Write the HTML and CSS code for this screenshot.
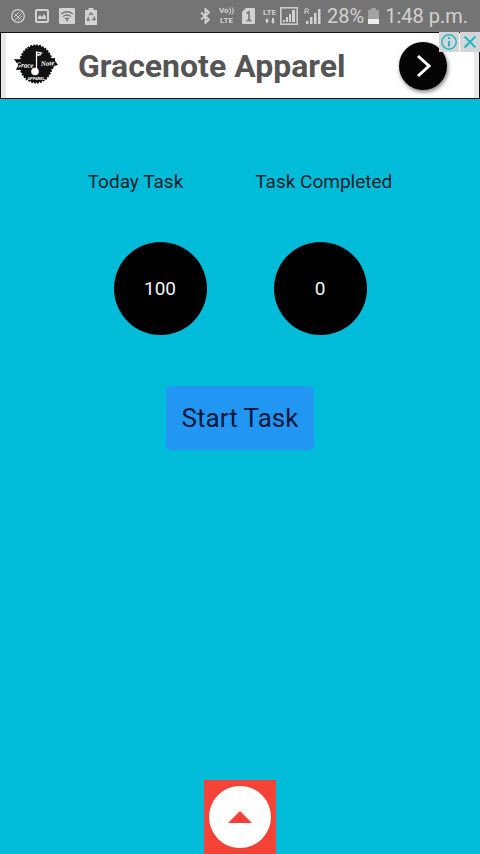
FILE: index.html
```html
<!DOCTYPE html>
<html lang="en">
<head>
<meta charset="utf-8">
<meta name="viewport" content="width=device-width, initial-scale=1">
<title>Today Task</title>
<link rel="stylesheet" href="styles.css">
</head>
<body>
<header class="status">
  <div class="notices">
    <svg width="14" height="14" viewBox="0 0 14 14" fill="none" stroke="currentColor"><circle cx="7" cy="7" r="6.300" stroke-width="1.300"/><path d="M3 8l5-5M4 11l7-7M7 11l4-4M4 5l5 5" stroke-width=".9"/></svg>
    <svg width="14" height="14" viewBox="0 0 14 14"><rect x="1" y="1" width="12" height="12" rx="1" fill="none" stroke="currentColor" stroke-width="2"/><path d="M3 10V8l2-2 2 2 2-3 2 3v2z" fill="currentColor"/></svg>
    <svg width="16" height="16" viewBox="0 0 16 16"><rect width="16" height="16" rx="1" fill="currentColor"/><g fill="none" stroke="#747474" stroke-width="1.300"><path d="M2 6q6-4.500 12 0M4 8.500q4-3 8 0M6 11q2-1.500 4 0"/></g><circle cx="8" cy="12.500" r="1" fill="#747474"/></svg>
    <svg width="12" height="17" viewBox="0 0 12 17"><path d="M3.500 0h5v2H12v15H0V2h3.500z" fill="currentColor"/><path d="M4 7l2-2 2 2M9 8.500l1 3H7M5 12H2.500l1-3" fill="none" stroke="#747474" stroke-width="1.400"/></svg>
  </div>
  <div class="system">
    <svg width="11" height="16" viewBox="0 0 11 16" fill="none" stroke="currentColor" stroke-width="1.800"><path d="M1 4.500l8 7L5.500 15V1L9 4.500l-8 7"/></svg>
    <span class="network"><span>Vo))</span><span>LTE</span></span>
    <svg width="13" height="16" viewBox="0 0 13 16"><path d="M4 0h8q1 0 1 1v14q0 1-1 1H1q-1 0-1-1V4z" fill="currentColor"/><path d="M4.500 5.500L7 4v8.500M4.500 12.500h5" fill="none" stroke="#747474" stroke-width="1.600"/></svg>
    <span class="network"><span>LTE</span><svg width="10" height="6" viewBox="0 0 10 6" fill="currentColor"><path d="M0 3l2-3 2 3H3v2H1V3zM6 3h1V0h2v3h1L8 6z"/></svg></span>
    <svg class="signal" width="18" height="18" viewBox="0 0 18 18"><rect x=".8" y=".8" width="16.400" height="16.400" fill="none" stroke="currentColor" stroke-width="1.500"/><path d="M3 13h2v2H3zM6 10h2v5H6zM9 7h2v8H9zM12 3h3v12h-3z" fill="currentColor"/></svg>
    <svg class="roaming" width="17" height="17" viewBox="0 0 17 17"><path d="M1 6V1h2.500q1 0 1 1.300T3.500 3.500H1M3 3.500L5 6" fill="none" stroke="currentColor"/><path d="M2 13h2.500v3H2zM6 9h2.500v7H6zM10 5h2.500v11H10zM14 1h2.500v15H14z" fill="currentColor"/></svg>
    <span class="percent">28%</span>
    <svg class="battery" width="11" height="16" viewBox="0 0 11 16"><path d="M3 0h5v2h3v9H0V2h3z" fill="#a3a3a3"/><path d="M0 11h11v5H0z" fill="#eee"/></svg>
    <time>1:48 p.m.</time>
  </div>
</header>

<aside class="ad" aria-label="Advertisement">
  <svg class="logo" width="44" height="40" viewBox="0 0 44 40" role="img" aria-label="Grace Note Apparel">
    <ellipse cx="22" cy="20" rx="16" ry="18.500" fill="#111" stroke="#111" stroke-width="2" stroke-dasharray="2 1"/>
    <path d="M0 15l18 1v9L2 26l2-5zM25 16l16-2v3l3 4-4 1-1 3-14 1z" fill="#111"/>
    <path d="M22.500 27V8l5 1-4 3M23 10l4 1" fill="none" stroke="#fff" stroke-width="1.200"/>
    <circle cx="21" cy="27.500" r="3.800" fill="#fff"/>
    <g class="logo-script"><text x="2" y="23" transform="rotate(3 2 23)">Grace</text><text x="27" y="22" transform="rotate(-4 27 22)">Note</text></g>
    <text class="logo-small" x="22" y="36" text-anchor="middle">APPAREL</text>
  </svg>
  <span class="brand">Gracenote Apparel</span>
  <a class="visit" href="#" aria-label="Visit advertiser"><svg width="48" height="48" viewBox="0 0 48 48"><path d="M19 14l11 10-11 10" fill="none" stroke="#fff" stroke-width="3"/></svg></a>
  <div class="ad-tools">
    <button aria-label="Ad information"><svg width="20" height="20" viewBox="0 0 20 20" fill="none" stroke="#25b7c6"><circle cx="10" cy="10" r="7.200" stroke-width="1.500"/><path d="M10 9v5.500M10 5v2" stroke-width="2"/></svg></button>
    <button aria-label="Close ad"><svg width="20" height="20" viewBox="0 0 20 20"><path d="M4.500 4.500l11 11M15.500 4.500l-11 11" fill="none" stroke="#25b7c6" stroke-width="2"/></svg></button>
  </div>
</aside>

<main>
  <div class="labels"><span>Today Task</span><span>Task Completed</span></div>
  <div class="counts"><output class="count" aria-label="Today Task">100</output><output class="count" aria-label="Task Completed">0</output></div>
  <button class="start">Start Task</button>
</main>

<footer>
  <button class="expand" aria-label="Expand"><svg width="62" height="62" viewBox="0 0 62 62"><circle cx="31" cy="31" r="31" fill="#fff"/><path d="M31 25l12 12H19z" fill="#f44336"/></svg></button>
</footer>
</body>
</html>
```
FILE: styles.css
```css
* { box-sizing: border-box; }
body {
  margin: 0;
  min-height: 100vh;
  display: flex;
  flex-direction: column;
  background: #00bcd8;
  color: #08202a;
  font-family: Roboto, "Liberation Sans", sans-serif;
}
button { border: 0; padding: 0; font: inherit; color: inherit; }
svg { display: block; flex: none; }

.status {
  height: 32px;
  display: flex;
  justify-content: space-between;
  align-items: center;
  padding: 0 12px 0 11px;
  background: #747474;
  color: #d2d2d2;
}
.notices { display: flex; align-items: center; gap: 10px; }
.system { display: flex; align-items: center; gap: 8px; }
.network {
  display: flex;
  flex-direction: column;
  align-items: center;
  font-size: 8px;
  line-height: 10px;
  font-weight: 700;
}
.signal { margin-left: -4px; }
.roaming { margin-left: -2px; }
.percent, time { font-size: 20px; line-height: 32px; }
.percent { margin-left: -2px; }
.battery { margin-left: -4px; }
time { margin-left: -2px; }

.ad {
  position: relative;
  height: 67px;
  display: flex;
  align-items: center;
  padding: 0 32px 0 8px;
  border: 1px solid #111;
  background: #fff;
  box-shadow: inset 5px 0 #e8e8e8, inset -5px 0 #e8e8e8;
}
.logo { margin: 0 20px 4px 5px; }
.logo-script { fill: #fff; font: italic 700 7px "Liberation Serif", serif; }
.logo-small { fill: #fff; font: 700 4px Roboto, sans-serif; }
.brand { flex: 1; font-size: 32px; font-weight: 700; line-height: 40px; color: #555; white-space: nowrap; }
.visit { border-radius: 50%; background: #050505; box-shadow: 1px 2px 4px #0008; }
.ad-tools { position: absolute; top: -1px; right: -1px; display: flex; gap: 1px; }
.ad-tools button { background: #d3d5d7; }

main { flex: 1; display: flex; flex-direction: column; align-items: center; padding-top: 71px; }
.labels { display: flex; justify-content: center; gap: 72px; font-size: 19px; line-height: 24px; }
.counts { display: flex; justify-content: center; gap: 67px; margin: 48px 0 51px; }
.count {
  width: 93px;
  height: 93px;
  display: grid;
  place-items: center;
  border-radius: 50%;
  background: #000;
  color: #f3f3f3;
  font-size: 19px;
}
.start {
  padding: 16px;
  border-radius: 5px;
  background: #2196f3;
  color: #06183a;
  font-size: 26px;
  line-height: 32px;
}

footer { display: flex; justify-content: center; }
.expand { padding: 6px 5px; background: #f44336; }
```
